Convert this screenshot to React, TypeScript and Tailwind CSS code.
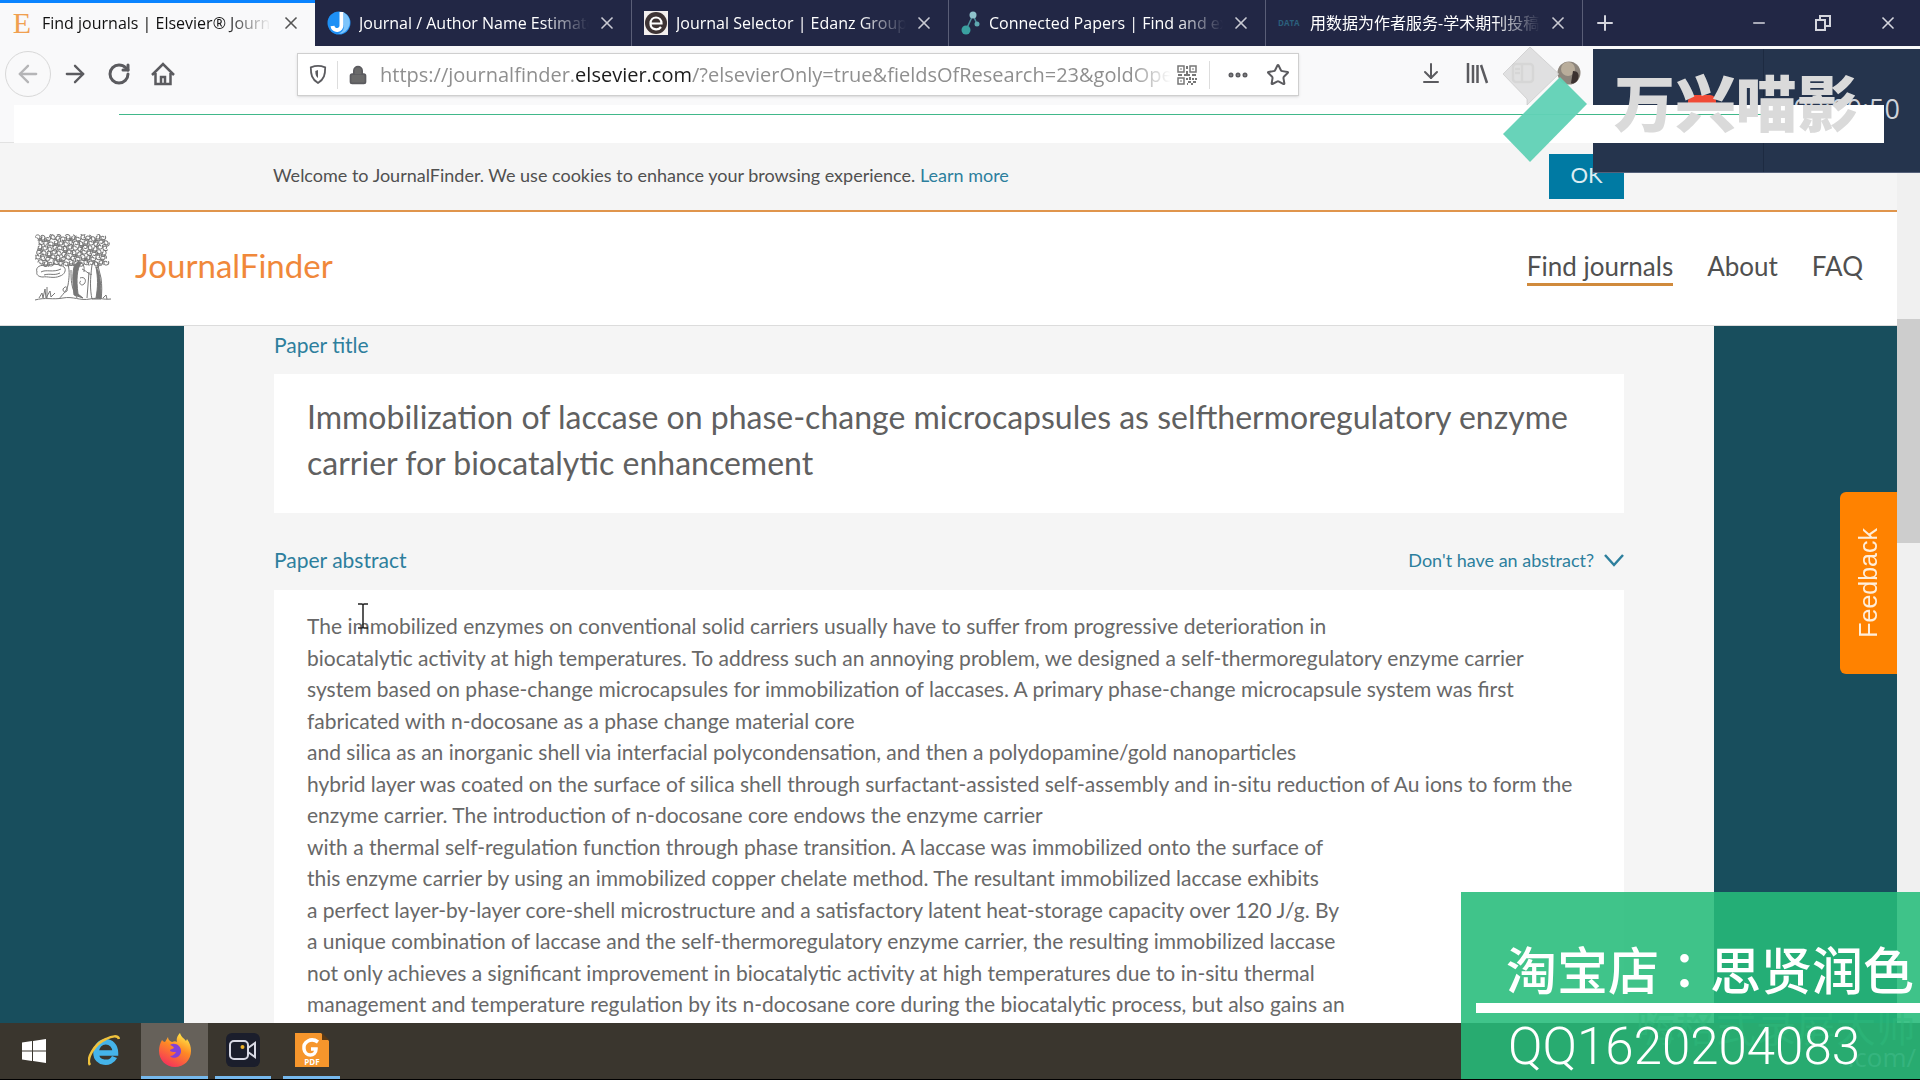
import type { ReactNode } from 'react';
import { ArrowDownToLine, ArrowLeft, ArrowRight, Ellipsis, Lock, Minus, Plus, RotateCw, Star, X } from 'lucide-react';

const PAPER_TITLE = [
  'Immobilization of laccase on phase-change microcapsules as selfthermoregulatory enzyme',
  'carrier for biocatalytic enhancement',
].join('\n');

const PAPER_ABSTRACT = [
  'The immobilized enzymes on conventional solid carriers usually have to suffer from progressive deterioration in',
  'biocatalytic activity at high temperatures. To address such an annoying problem, we designed a self-thermoregulatory enzyme carrier',
  'system based on phase-change microcapsules for immobilization of laccases. A primary phase-change microcapsule system was first',
  'fabricated with n-docosane as a phase change material core',
  'and silica as an inorganic shell via interfacial polycondensation, and then a polydopamine/gold nanoparticles',
  'hybrid layer was coated on the surface of silica shell through surfactant-assisted self-assembly and in-situ reduction of Au ions to form the',
  'enzyme carrier. The introduction of n-docosane core endows the enzyme carrier',
  'with a thermal self-regulation function through phase transition. A laccase was immobilized onto the surface of',
  'this enzyme carrier by using an immobilized copper chelate method. The resultant immobilized laccase exhibits',
  'a perfect layer-by-layer core-shell microstructure and a satisfactory latent heat-storage capacity over 120 J/g. By',
  'a unique combination of laccase and the self-thermoregulatory enzyme carrier, the resulting immobilized laccase',
  'not only achieves a significant improvement in biocatalytic activity at high temperatures due to in-situ thermal',
  'management and temperature regulation by its n-docosane core during the biocatalytic process, but also gains an',
].join('\n');

function ElsevierIcon() {
  return <span className="w-5 text-center font-['Liberation_Serif'] text-[30px] leading-none text-[#f0a050]">E</span>;
}

function JaneIcon() {
  return (
    <svg viewBox="0 0 24 24" className="size-6">
      <circle cx="12" cy="12" r="11.5" fill="#1e90f5" />
      <path d="M17 1.500a11.500 11.500 0 0 1-6 21.500c5-2 6-5 6-9z" fill="#7cc4fb" />
      <path d="M14.500 1v13a4.500 4.500 0 0 1-9 1" fill="none" stroke="#fff" strokeWidth="4" />
    </svg>
  );
}

function EdanzIcon() {
  return (
    <svg viewBox="0 0 24 24" className="size-6">
      <path d="M0 0h24v24H0z" fill="#f3efee" />
      <circle cx="12" cy="12" r="11" fill="#3d3334" />
      <path d="M6.500 12.500h11c0-8-11-8-11 0 0 7 8 7 10.500 3.500" fill="none" stroke="#fff" strokeWidth="2.200" />
    </svg>
  );
}

function ConnectedIcon() {
  return (
    <svg viewBox="0 0 20 24" className="h-6 w-5">
      <path d="M5 19 12 4l4 9" fill="none" stroke="#4d8f9c" strokeWidth="1.500" />
      <circle cx="5" cy="19" r="4.500" fill="#3aa0a0" />
      <circle cx="12" cy="4" r="3.500" fill="#8fc3cc" />
      <circle cx="16" cy="13" r="2.500" fill="#5fa8b0" />
    </svg>
  );
}

function DataIcon() {
  return <span className="w-6 text-[8px] font-bold leading-none text-[#2b5f7c]">DATA</span>;
}

const TABS: { title: string; icon: ReactNode; active?: boolean }[] = [
  { title: 'Find journals | Elsevier® JournalFinder', icon: <ElsevierIcon />, active: true },
  { title: 'Journal / Author Name Estimator', icon: <JaneIcon /> },
  { title: 'Journal Selector | Edanz Group', icon: <EdanzIcon /> },
  { title: 'Connected Papers | Find and explore', icon: <ConnectedIcon /> },
  { title: '用数据为作者服务-学术期刊投稿', icon: <DataIcon /> },
];

function TabStrip() {
  return (
    <div className="flex h-[46px] shrink-0 bg-[#222745] text-white">
      {TABS.map((tab) => (
        <div
          key={tab.title}
          className={
            tab.active
              ? 'flex w-[315px] items-center gap-2.5 border-t-3 border-[#0a84ff] bg-[#f9f9fa] pr-3.5 pb-1 pl-3 text-[#111]'
              : 'flex w-[317px] items-center gap-2 border-r border-[#5a5e77] pr-3.5 pl-3'
          }
        >
          {tab.icon}
          <span className="min-w-0 flex-1 overflow-hidden mask-r-from-80% text-[16px] whitespace-nowrap">{tab.title}</span>
          <button aria-label="Close tab">
            <X className={tab.active ? 'size-5 text-[#555]' : 'size-5 text-[#c9cad3]'} />
          </button>
        </div>
      ))}
      <button aria-label="New tab" className="ml-2.5">
        <Plus className="size-6 text-[#d5d6de]" />
      </button>
      <div className="ml-auto flex items-center gap-[46px] pr-[22px] text-[#d5d6de]">
        <button aria-label="Minimize">
          <Minus className="size-[18px]" />
        </button>
        <button aria-label="Restore">
          <svg viewBox="0 0 18 18" className="size-[18px]" fill="none" stroke="currentColor" strokeWidth="2">
            <path d="M2 6h9v10H2zM6 6V2h10v10h-5" />
          </svg>
        </button>
        <button aria-label="Close">
          <X className="size-5" strokeWidth={2} />
        </button>
      </div>
    </div>
  );
}

function QrIcon() {
  return (
    <svg viewBox="0 0 20 20" className="size-5 shrink-0" fill="none" stroke="#777" strokeWidth="1.500">
      <path d="M1 1h6v6H1zM13 1h6v6h-6zM1 13h6v6H1z" />
      <path d="M3.500 4h1M15.500 4h1M3.500 16h1M10 1v3M10 6v5M1 10h4M7 10h6M15 10h4M10 13v2M13 12v3M16 13v2M19 13v2M11 17h3M16 17h3M10 19h1M14 19h2" strokeWidth="2" />
    </svg>
  );
}

function Toolbar() {
  return (
    <div className="flex h-[97px] shrink-0 items-start border-b border-[#e2e2e2] bg-[#f9f9fa] pt-[5px] text-[#5b5b5f]">
      <div className="flex h-[46px] w-[297px] items-center gap-5 pl-[5px]">
        <button aria-label="Back" className="flex size-[46px] items-center justify-center rounded-full border border-[#d8d8d8] text-[#b5b5b7]">
          <ArrowLeft className="size-7" />
        </button>
        <button aria-label="Forward" className="-ml-2.5">
          <ArrowRight className="size-7" />
        </button>
        <button aria-label="Reload" className="-ml-0.5">
          <RotateCw className="size-6" strokeWidth={3} />
        </button>
        <button aria-label="Home">
          <svg viewBox="0 0 24 24" className="size-6" fill="none" stroke="currentColor" strokeWidth="2.500">
            <path d="M1 13 12 2l11 11M4.500 11v11h15V11" />
            <path d="M10 22v-7h4v7" />
          </svg>
        </button>
      </div>
      <div className="mt-0.5 flex h-[43px] w-[1002px] items-center border border-[#cfcfcf] bg-white pr-2 pl-[11px] shadow-sm">
        <svg viewBox="0 0 20 22" className="h-[21px] w-[18px] shrink-0" fill="none" stroke="currentColor" strokeWidth="2">
          <path d="M10 1.500c3 0 5 .5 8 1.500 0 8-1 13-8 17.500C3 16 2 11 2 3c3-1 5-1.500 8-1.500z" />
          <path d="M10 6v9c-2-1.500-3-4-3-8z" fill="currentColor" stroke="none" />
        </svg>
        <span className="mx-2.5 h-7 w-px bg-[#ddd]" />
        <Lock className="size-5 shrink-0 fill-[#6a6a6a]" />
        <label htmlFor="url" className="sr-only">
          Address
        </label>
        <div className="relative ml-3 min-w-0 flex-1">
          <input
            id="url"
            readOnly
            className="w-full text-[20px] text-transparent outline-none"
            defaultValue="https://journalfinder.elsevier.com/?elsevierOnly=true&fieldsOfResearch=23&goldOpenAccess"
          />
          <span aria-hidden className="pointer-events-none absolute inset-0 overflow-hidden mask-r-from-95% text-[20px] whitespace-nowrap text-[#8f8f8f]">
            https://journalfinder.<span className="text-[#1c1c1c]">elsevier.com</span>/?elsevierOnly=true&amp;fieldsOfResearch=23&amp;goldOpenAccess
          </span>
        </div>
        <span className="w-1.5" />
        <QrIcon />
        <span className="mx-3 h-7 w-px bg-[#ddd]" />
        <button aria-label="Page actions" className="mx-1">
          <Ellipsis className="size-6" strokeWidth={3} />
        </button>
        <button aria-label="Bookmark" className="ml-3">
          <Star className="size-6" />
        </button>
      </div>
      <div className="mt-2.5 flex items-center gap-[22px] pl-[120px]">
        <button aria-label="Downloads">
          <ArrowDownToLine className="size-6" />
        </button>
        <button aria-label="Library">
          <svg viewBox="0 0 24 24" className="size-6" fill="none" stroke="currentColor" strokeWidth="2.500">
            <path d="M3 2v20M8 4v18M12.500 4v18M16 4l6 18" />
          </svg>
        </button>
        <button aria-label="Sidebar" className="text-[#b5b5b7]">
          <svg viewBox="0 0 24 24" className="size-6" fill="none" stroke="currentColor" strokeWidth="2.500">
            <rect x="2" y="3" width="20" height="18" rx="3" />
            <path d="M11 3v18M4 8h5M4 12h5" />
          </svg>
        </button>
        <button aria-label="Account">
          <svg viewBox="0 0 24 24" className="size-6">
            <circle cx="12" cy="12" r="11.500" fill="#8d857c" />
            <circle cx="11" cy="8" r="7" fill="#b9ad9b" />
            <path d="M16 10c6 0 7 5 4 10-3 3-5 3-6 2z" fill="#3c3230" />
          </svg>
        </button>
      </div>
    </div>
  );
}

const LEAVES = Array.from({ length: 84 }, (_, i) => {
  const col = i % 14;
  const row = Math.floor(i / 14);
  return { x: 3 + col * 5 + ((row * 3) % 4), y: 3 + row * 5 + ((col * 7) % 3), turn: (i * 67) % 360 };
});

function TreeLogo() {
  return (
    <svg viewBox="0 0 76 68" className="h-[68px] w-[76px]" fill="none" stroke="#777" strokeWidth="1">
      {LEAVES.map((leaf, i) => (
        <path
          key={i}
          d="M-3 1c0-4 5-4 5-1s-4 2-3 0M1 3c2 0 3-2 2-4"
          transform={`translate(${leaf.x} ${leaf.y}) rotate(${leaf.turn})`}
        />
      ))}
      <path d="M2 38c-2-5 4-8 9-6 5-3 14-2 18 1 3 3 0 8-4 9-6 3-13 0-17 1-5 0-7-3-6-5zM6 38c5-3 12 1 20-3M9 41c6-2 10 1 16-2" />
      <path d="M33 30c2 8 1 15 0 21-1 6-6 10-9 14M36 36c0 10 0 17 6 28" />
      <path d="M39 33c2-5 5-6 7-4-4 6-5 16-3 31l5 4-9-3c-1-10-2-20 0-28z" fill="#777" />
      <path d="M46 29c4 2 3 6 3 9M45 44c5-2 7 3 4 6s-6-2-3-3" />
      <path d="M57 31c2-5 6-4 6 1l3 12c1 8 1 14 0 21h-9c-2-9-2-20 0-34z" />
      <path d="M61 33c3 3 5 12 5 31h-5c2-11 2-20 0-31z" fill="#777" />
      <path d="M47 35c5 2 8 7 10 5M54 38l-2 26M28 55c3-4 5-2 4 2-2 2-4 1-4-2z" />
      <path d="M0 66c10-3 18 0 28-2s17 3 27 1 12 1 21 0M4 64l3-5 1 5 2-9 1 9 4-7 1 6 4-4M12 64V53M68 64l3-3 1 4" />
    </svg>
  );
}

function SiteHeader() {
  return (
    <header className="flex h-[114px] shrink-0 items-center border-b border-[#dcdcdc] bg-white pr-[34px] pb-0.5 pl-[35px]">
      <TreeLogo />
      <a href="#home" className="ml-6 pb-1 font-[Lato] text-[33px] text-[#f0883a]">
        JournalFinder
      </a>
      <nav className="ml-auto flex items-center gap-[34px] font-[Lato] text-[26px] leading-[34px] text-[#505050]">
        <a href="#find" className="border-b-3 border-[#d08a3c]">
          Find journals
        </a>
        <a href="#about" className="border-b-3 border-transparent">
          About
        </a>
        <a href="#faq" className="border-b-3 border-transparent">
          FAQ
        </a>
      </nav>
    </header>
  );
}

function SearchForm() {
  return (
    <form className="mr-[183px] ml-[184px] flex min-h-0 flex-1 flex-col bg-[#f5f5f5] px-[90px] font-[Lato]">
      <label htmlFor="title" className="mt-[3px] text-[21px] leading-[32px] text-[#2d7f9d]">
        Paper title
      </label>
      <textarea
        id="title"
        wrap="off"
        rows={2}
        defaultValue={PAPER_TITLE}
        className="mt-[13px] h-[139px] shrink-0 resize-none overflow-hidden bg-white px-[33px] pt-5 text-[32px] leading-[46px] text-[#606060] outline-none"
      />
      <div className="flex items-center justify-between pt-[31px] text-[#2d7f9d]">
        <label htmlFor="abstract" className="text-[21px] leading-[32px]">
          Paper abstract
        </label>
        <button type="button" className="flex items-center gap-2.5 text-[18px]">
          Don't have an abstract?
          <svg viewBox="0 0 20 14" className="h-3.5 w-5" fill="none" stroke="currentColor" strokeWidth="2.500">
            <path d="m1 2 9 10 9-10" />
          </svg>
        </button>
      </div>
      <textarea
        id="abstract"
        wrap="off"
        defaultValue={PAPER_ABSTRACT}
        className="mt-[14px] min-h-0 flex-1 resize-none overflow-hidden bg-white px-[33px] pt-5 text-[21px] leading-normal text-[#686868] outline-none"
      />
    </form>
  );
}

function Taskbar() {
  return (
    <footer className="flex h-[57px] shrink-0 items-stretch border-b border-black bg-[#3a362e]">
      <button aria-label="Start" className="flex w-[67px] items-center justify-center">
        <svg viewBox="0 0 24 24" className="size-6" fill="#fff">
          <path d="M0 3.500 10 2v9.500H0zM11 2l13-2v11.500H11zM0 12.500h10V22L0 20.500zM11 12.500h13V24l-13-2z" />
        </svg>
      </button>
      <button aria-label="Internet Explorer" className="mr-px flex w-[73px] items-center justify-center">
        <svg viewBox="0 0 32 32" className="size-8" fill="none">
          <path d="M8 18h19.500c0-15-19.500-15-19.500 0 0 11 15 12 18.500 4" stroke="#45b4ea" strokeWidth="5.500" />
          <path d="M2 30C-2 24 6 9 18 4c6-3 12-4 13 0" stroke="#f0c23c" strokeWidth="2.500" />
        </svg>
      </button>
      <button aria-label="Firefox" className="flex w-[67px] items-center justify-center border-b-3 border-[#76b9ed] bg-[#66615a]">
        <svg viewBox="0 0 34 34" className="size-[34px]">
          <defs>
            <linearGradient id="fox" x1="0.800" y1="0" x2="0.300" y2="1">
              <stop offset="0" stopColor="#fff04a" />
              <stop offset="0.450" stopColor="#ff8a24" />
              <stop offset="1" stopColor="#f5305c" />
            </linearGradient>
          </defs>
          <path d="M4 7c1 1 2 2 3 2l3-5c0 3 2 4 4 5 2-1 4-1 5 0-1-4 1-7 3-9 1 4 4 5 6 8l1-2c3 4 4 8 4 12 0 9-7 16-16 16S1 27 1 18c0-4 1-8 3-11z" fill="url(#fox)" />
          <path d="M12 12c4-3 11 0 11 6s-7 9-11 5c3 0 5-2 6-4-3 0-6 0-6-2 1-1 3-1 4-2-1-2-2-2-4-3z" fill="#8440d8" />
        </svg>
      </button>
      <button aria-label="Screen recorder" className="ml-[7px] flex w-[56px] items-center justify-center border-b-3 border-[#76b9ed]">
        <svg viewBox="0 0 34 34" className="size-[34px]" fill="none" stroke="#d8d9e4" strokeWidth="2">
          <rect width="34" height="34" rx="6" fill="#1b1e2c" stroke="none" />
          <rect x="4" y="8" width="18" height="18" rx="4" />
          <path d="m22 15 7-5v14l-7-5z" />
          <circle cx="16.500" cy="14" r="2" fill="#f0b429" stroke="none" />
        </svg>
      </button>
      <button aria-label="PDF editor" className="ml-3 flex w-[57px] items-center justify-center border-b-3 border-[#76b9ed]">
        <svg viewBox="0 0 34 34" className="size-[34px]">
          <path d="M0 0h26l8 8v26H0z" fill="#f6962c" />
          <path d="M27 0v7h7" fill="#5d3a14" />
          <path d="M23 9c-7-5-15 0-14 7 1 8 12 8 12 0h-5" fill="none" stroke="#fff" strokeWidth="3.500" />
          <text x="17" y="32" textAnchor="middle" fontSize="8" fontWeight="700" fill="#fff">
            PDF
          </text>
        </svg>
      </button>
    </footer>
  );
}

/** Recorder panel with the clock, the white strip and the editor's logo, stacked over the browser. */
function RecorderOverlay() {
  return (
    <div className="pointer-events-none absolute inset-x-0 top-[49px] h-[124px]">
      <div className="absolute top-0 right-0 flex h-full w-[327px] border-b border-[#55617a] bg-[#25344d]">
        <div className="flex w-[171px] justify-center border-r border-[#1d2a41] pt-[46px] pl-12">
          <span className="h-6 w-7 rounded-md bg-[#f04a36]" />
        </div>
        <span className="absolute top-[42px] right-5 font-['Open_Sans'] text-[27px] leading-[36px] text-[#cfd3da]">00:00:50</span>
      </div>
      <div className="absolute top-14 right-[36px] left-[14px] h-[38px] bg-white pt-[9px]">
        <div className="mr-[120px] ml-[105px] h-px bg-[#41b88a]" />
      </div>
      <svg viewBox="0 0 84 116" className="absolute -top-[2px] right-[333px] h-[116px] w-[84px]">
        <path d="M27 0 56 27 24 58 24 52 0 27z" fill="#dcdcdc" fillOpacity="0.850" stroke="#bbb" strokeWidth="0.500" />
        <path d="M57 30 84 57 27 115 0 87z" fill="#62d1b6" fillOpacity="0.960" />
      </svg>
      <span className="absolute top-5 right-[62px] font-['Noto_Sans_CJK_SC'] text-[61px] leading-[64px] font-black text-[#dadada]">
        万兴喵影
      </span>
    </div>
  );
}

function ShopBanner() {
  return (
    <div className="absolute right-0 bottom-px flex h-[187px] w-[459px] flex-col overflow-hidden bg-[#25bc7a]/88 text-white">
      <p aria-hidden className="absolute right-1 bottom-[34px] font-['Noto_Sans_CJK_SC'] text-[40px] leading-10 whitespace-nowrap text-[#2fb97c]/50">
        嗨格式录屏大师
      </p>
      <p aria-hidden className="absolute right-1 bottom-[6px] font-['Open_Sans'] text-[26px] leading-8 text-[#4cc596]/40">.com/</p>
      <p className="relative mt-[47px] ml-[45px] font-['Noto_Sans_CJK_SC'] text-[51px] leading-[58px] font-medium whitespace-nowrap">
        淘宝店<span className="font-['Noto_Sans_CJK_TC']" lang="zh-TW">：</span>思贤润色
      </p>
      <div className="relative mt-[6px] ml-[15px] h-[10px] shrink-0 bg-white" />
      <p className="relative mt-0.5 ml-[47px] font-[Roboto] text-[51px] leading-[64px] font-light">QQ1620204083</p>
    </div>
  );
}

export default function App() {
  return (
    <div className="relative flex h-screen w-full flex-col overflow-hidden bg-[#f5f5f5] font-['Open_Sans','Noto_Sans_CJK_SC',sans-serif]">
      <TabStrip />
      <Toolbar />
      <div className="flex min-h-0 flex-1">
        <main className="relative flex min-w-0 flex-1 flex-col">
          <div className="flex h-[69px] shrink-0 items-center justify-between border-b-2 border-[#e0954c] px-[273px] font-[Lato]">
            <p className="pb-1 text-lg text-[#505050]">
              Welcome to JournalFinder. We use cookies to enhance your browsing experience.{' '}
              <a href="#more" className="text-[#2d7f9d]">
                Learn more
              </a>
            </p>
            <button className="h-[45px] w-[75px] bg-[#007aa3] pb-1 text-[22px] text-[#dcecf2]">OK</button>
          </div>
          <SiteHeader />
          <div className="flex min-h-0 flex-1 flex-col bg-[#184e5d]">
            <SearchForm />
          </div>
          <button className="absolute top-[349px] right-0 flex h-[182px] w-[57px] items-center justify-center rounded-l-md bg-[#ff8200] font-['Liberation_Sans'] text-[25px] text-[#ffeeda]">
            <span className="rotate-180 [writing-mode:vertical-rl]">Feedback</span>
          </button>
        </main>
        <div className="w-[23px] bg-[#f0f0f0] pt-[176px]">
          <div className="h-[224px] bg-[#cdcdcd]" />
        </div>
      </div>
      <Taskbar />
      <svg viewBox="0 0 10 26" className="pointer-events-none absolute top-[603px] left-[358px] h-[26px] w-[10px]" fill="none" stroke="#222" strokeWidth="1.500">
        <path d="M0 1h4l1 1 1-1h4M5 2v22M0 25h4l1-1 1 1h4" />
      </svg>
      <RecorderOverlay />
      <ShopBanner />
    </div>
  );
}
